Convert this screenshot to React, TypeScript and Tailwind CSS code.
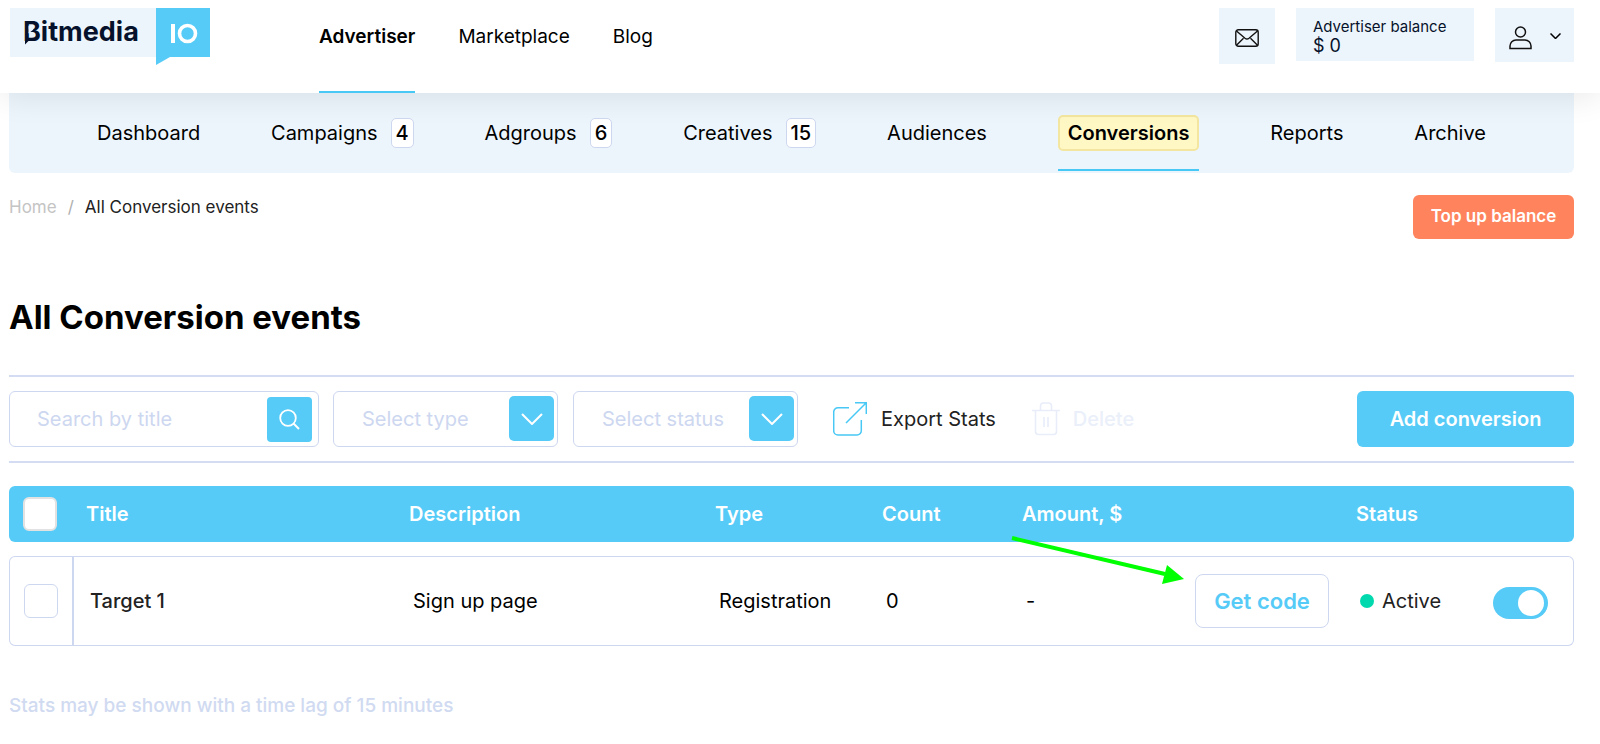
import React from 'react';
import clsx from 'clsx';

type NavItem = { label: string; count?: number; active?: boolean };

const MAIN_NAV: NavItem[] = [
  { label: 'Advertiser', active: true },
  { label: 'Marketplace' },
  { label: 'Blog' },
];

const SUB_NAV: NavItem[] = [
  { label: 'Dashboard' },
  { label: 'Campaigns', count: 4 },
  { label: 'Adgroups', count: 6 },
  { label: 'Creatives', count: 15 },
  { label: 'Audiences' },
  { label: 'Conversions', active: true },
  { label: 'Reports' },
  { label: 'Archive' },
];

const CONVERSIONS = [
  { id: 1, title: 'Target 1', description: 'Sign up page', type: 'Registration', count: 0, amount: '-', status: 'Active' },
];

function Logo() {
  return (
    <svg width="200" height="57" viewBox="0 0 200 57" role="img" aria-label="Bitmedia IO">
      <rect width="146" height="49" fill="#edf5fc" />
      <path d="M146 0h54v49h-40l-14 8z" fill="#56cbf7" />
      <text x="13" y="33" fontSize="27" fontWeight="700" fill="#06122b">Bitmedia</text>
      <path d="M15 32h4.500l-4.500 4.500z" fill="#06122b" />
      <path d="M18.500 17.500l5 4-5 4z" fill="#edf5fc" />
      <rect x="161" y="16" width="4" height="19" fill="#fff" />
      <circle cx="177.500" cy="25.500" r="8" fill="none" stroke="#fff" strokeWidth="3.600" />
    </svg>
  );
}

function Chevron({ className }: { className: string }) {
  return (
    <svg className={className} viewBox="0 0 22 12" fill="none" stroke="currentColor" aria-hidden="true">
      <path d="M1 1l10 10L21 1" />
    </svg>
  );
}

function Header() {
  return (
    <header className="relative z-10 flex h-[93px] items-start bg-white pl-[10px] pr-[26px] pt-2 shadow-[0_4px_32px_rgba(0,0,0,0.09)]">
      <a href="#home" className="mr-[109px] shrink-0">
        <Logo />
      </a>
      <nav className="flex gap-[43px] self-stretch">
        {MAIN_NAV.map((item) => (
          <a
            key={item.label}
            href={`#${item.label.toLowerCase()}`}
            className={clsx('border-b-2 pt-[17px] text-[19px] leading-6', item.active ? 'border-[#48c8f5] font-semibold' : 'border-transparent')}
          >
            {item.label}
          </a>
        ))}
      </nav>
      <div className="ml-auto flex items-start gap-[21px]">
        <button aria-label="Messages" className="flex size-14 items-center justify-center bg-[#edf5fc] pt-1">
          <svg width="24" height="18" viewBox="0 0 24 18" fill="none" stroke="#111" strokeWidth="1.400" aria-hidden="true">
            <rect x="0.800" y="0.800" width="22.400" height="16.400" rx="2.500" />
            <path d="M1.500 2l8.500 7.200q2 1.500 4 0L22.500 2M1.500 16.300l7-7M22.500 16.300l-7-7" />
          </svg>
        </button>
        <div className="h-[53px] w-[178px] bg-[#edf5fc] px-[17px] pt-[10px] text-[#06122b]">
          <div className="whitespace-nowrap text-[15px] leading-[18px]">Advertiser balance</div>
          <div className="text-[18px] leading-5">$ 0</div>
        </div>
        <button aria-label="Account" className="flex h-[54px] w-[79px] items-start justify-between bg-[#edf5fc] pl-[14px] pr-[13px] pt-[18px]">
          <svg width="23" height="24" viewBox="0 0 23 24" fill="none" stroke="#111" strokeWidth="1.500" aria-hidden="true">
            <circle cx="11.500" cy="6" r="5" />
            <path d="M1 22.500v-2.500a6 6 0 0 1 6-6h9a6 6 0 0 1 6 6v2.500z" />
          </svg>
          <Chevron className="mt-[7px] h-[6px] w-[11px] stroke-[3]" />
        </button>
      </div>
    </header>
  );
}

function SubNav() {
  return (
    <nav className="flex h-20 justify-between rounded-b-md bg-[#edf5fc] px-[88px] text-[20px]">
      {SUB_NAV.map((item) => (
        <a
          key={item.label}
          href={`#${item.label.toLowerCase()}`}
          className={clsx('mb-[2px] flex items-center border-b-2 pt-1', item.active ? 'border-b-[#48c8f5]' : 'border-b-transparent')}
        >
          {item.active ? (
            <span className="rounded-[5px] border-2 border-[#f3e6a0] bg-[#fff8c4] px-2 py-1 font-semibold leading-6">{item.label}</span>
          ) : (
            item.label
          )}
          {item.count !== undefined && (
            <span className="ml-[13px] rounded-[5px] border border-[#cdd7f0] bg-white px-1 font-medium leading-7">{item.count}</span>
          )}
        </a>
      ))}
    </nav>
  );
}

function FilterSelect({ label }: { label: string }) {
  return (
    <div className="relative w-[225px]">
      <select
        aria-label={label}
        className="h-14 w-full appearance-none rounded-md border border-[#cdd7f0] bg-white pl-7 pr-14 text-[20px] text-[#cdd7f0] outline-none"
      >
        <option>{label}</option>
      </select>
      <span className="pointer-events-none absolute right-1 top-[5px] flex size-[45px] items-center justify-center rounded-[5px] bg-[#56cbf7] text-white">
        <Chevron className="h-3 w-[22px] stroke-[2]" />
      </span>
    </div>
  );
}

function Toolbar() {
  return (
    <div className="flex items-center border-y-2 border-[#d3dcf2] py-[14px] text-[20px]">
      <div className="flex h-14 w-[310px] items-center rounded-md border border-[#cdd7f0] pl-[27px] pr-[6px]">
        <input
          type="text"
          aria-label="Search by title"
          placeholder="Search by title"
          className="min-w-0 flex-1 outline-none placeholder:text-[#cdd7f0]"
        />
        <button aria-label="Search" className="flex size-[45px] items-center justify-center rounded bg-[#56cbf7]">
          <svg width="21" height="21" viewBox="0 0 21 21" fill="none" stroke="#fff" strokeWidth="1.800" aria-hidden="true">
            <circle cx="9" cy="9" r="7.800" />
            <path d="M14.500 14.500l5.500 5.500" strokeWidth="2" />
          </svg>
        </button>
      </div>
      <div className="ml-[14px] flex gap-[15px]">
        <FilterSelect label="Select type" />
        <FilterSelect label="Select status" />
      </div>
      <button className="ml-[35px] flex items-center gap-[14px] text-[#222]">
        <svg width="34" height="34" viewBox="0 0 34 34" fill="none" stroke="#48c8f5" strokeWidth="1.500" aria-hidden="true">
          <path d="M16 5.700H5a4.300 4.300 0 0 0-4.300 4.300v18.700A4.300 4.300 0 0 0 5 33h19a4.300 4.300 0 0 0 4.300-4.300V18M13 21L33 1M22 .8h11.300V12" />
        </svg>
        Export Stats
      </button>
      <button disabled className="ml-9 flex items-center gap-[13px] font-medium text-[#eaeffa]">
        <svg width="28" height="34" viewBox="0 0 28 34" fill="none" stroke="#e8edf9" strokeWidth="1.600" aria-hidden="true">
          <path d="M0 8.500h28M3.500 8.500v21a3 3 0 0 0 3 3h15a3 3 0 0 0 3-3v-21M8.500 8.500V4a3 3 0 0 1 3-3h5a3 3 0 0 1 3 3v4.500M12 15v10M16 15v10" />
        </svg>
        Delete
      </button>
      <button className="ml-auto h-14 w-[217px] rounded-md bg-[#56cbf7] font-semibold text-white">Add conversion</button>
    </div>
  );
}

function ConversionsTable() {
  const [active, setActive] = React.useState(true);

  return (
    <table className="mt-[9px] w-full table-fixed border-separate border-spacing-x-0 border-spacing-y-[14px] text-left text-[20px]">
      <thead>
        <tr className="h-14 bg-[#56cbf7] text-white [&>th]:pl-3 [&>th]:font-semibold">
          <th className="w-[65px] rounded-l-md">
            <input type="checkbox" aria-label="Select all" className="ml-[2px] block size-[34px] appearance-none rounded-md border-2 border-[#e2e2e2] bg-white checked:bg-[#48c8f5]" />
          </th>
          <th>Title</th>
          <th className="w-[306px]">Description</th>
          <th className="w-[167px]">Type</th>
          <th className="w-[140px]">Count</th>
          <th className="w-[173px]">Amount, $</th>
          <th className="w-[161px]" aria-label="Code" />
          <th className="w-[133px]">Status</th>
          <th className="w-[97px] rounded-r-md" aria-label="Enabled" />
        </tr>
      </thead>
      <tbody>
        {CONVERSIONS.map((row) => (
          <tr key={row.id} className="h-[90px] [&>td]:border-y [&>td]:border-[#cdd7f0] [&>td]:pl-4">
            <td className="rounded-l-md border-l border-r-2">
              <input type="checkbox" aria-label={`Select ${row.title}`} className="-ml-[2px] block size-[34px] appearance-none rounded-md border border-[#cdd7f0] bg-white checked:bg-[#48c8f5]" />
            </td>
            <td className="font-medium text-[#222]">{row.title}</td>
            <td>{row.description}</td>
            <td>{row.type}</td>
            <td>{row.count}</td>
            <td>{row.amount}</td>
            <td>
              <div className="relative -ml-1 w-[134px]">
                <button className="h-[54px] w-full rounded-lg border border-[#cdd7f0] bg-white text-[22px] font-semibold text-[#56cbf7]">Get code</button>
                <svg className="pointer-events-none absolute -top-10 right-[144px]" width="174" height="52" viewBox="0 0 174 52" aria-hidden="true">
                  <path d="M1 4l153 36" stroke="#0f0" strokeWidth="4" />
                  <path d="M156 31l17 14-22 5z" fill="#0f0" />
                </svg>
              </div>
            </td>
            <td className="text-[#222]">
              <span className="flex items-center gap-2">
                <span className="size-[14px] rounded-full bg-[#00d8ad]" />
                {row.status}
              </span>
            </td>
            <td className="rounded-r-md border-r">
              <label className="flex w-[55px] cursor-pointer pt-1">
                <input type="checkbox" role="switch" aria-label="Enabled" checked={active} onChange={() => setActive(!active)} className="peer sr-only" />
                <span className="flex h-8 w-full items-center rounded-full bg-[#cdd7f0] px-1 peer-checked:justify-end peer-checked:bg-[#56cbf7]">
                  <span className="size-[26px] rounded-full bg-white" />
                </span>
              </label>
            </td>
          </tr>
        ))}
      </tbody>
    </table>
  );
}

export default function App() {
  return (
    <div className="min-h-screen bg-white font-['Inter',sans-serif] text-black">
      <Header />
      <main className="pl-[9px] pr-[26px]">
        <SubNav />
        <div className="flex items-start justify-between pt-[22px]">
          <nav aria-label="Breadcrumb" className="flex gap-[11px] text-[17px] leading-6">
            <a href="#home" className="text-[#c4c4c4]">Home</a>
            <span className="text-[#b0b0b0]">/</span>
            <span className="text-[#222]">All Conversion events</span>
          </nav>
          <button className="h-11 w-[161px] rounded-md bg-[#ff845e] text-[17px] font-semibold text-white">Top up balance</button>
        </div>
        <h1 className="mb-9 mt-[56px] text-[33px] font-bold leading-[44px]">All Conversion events</h1>
        <Toolbar />
        <ConversionsTable />
        <p className="mt-8 text-[19px] font-medium leading-7 text-[#d0daf1]">Stats may be shown with a time lag of 15 minutes</p>
      </main>
    </div>
  );
}
